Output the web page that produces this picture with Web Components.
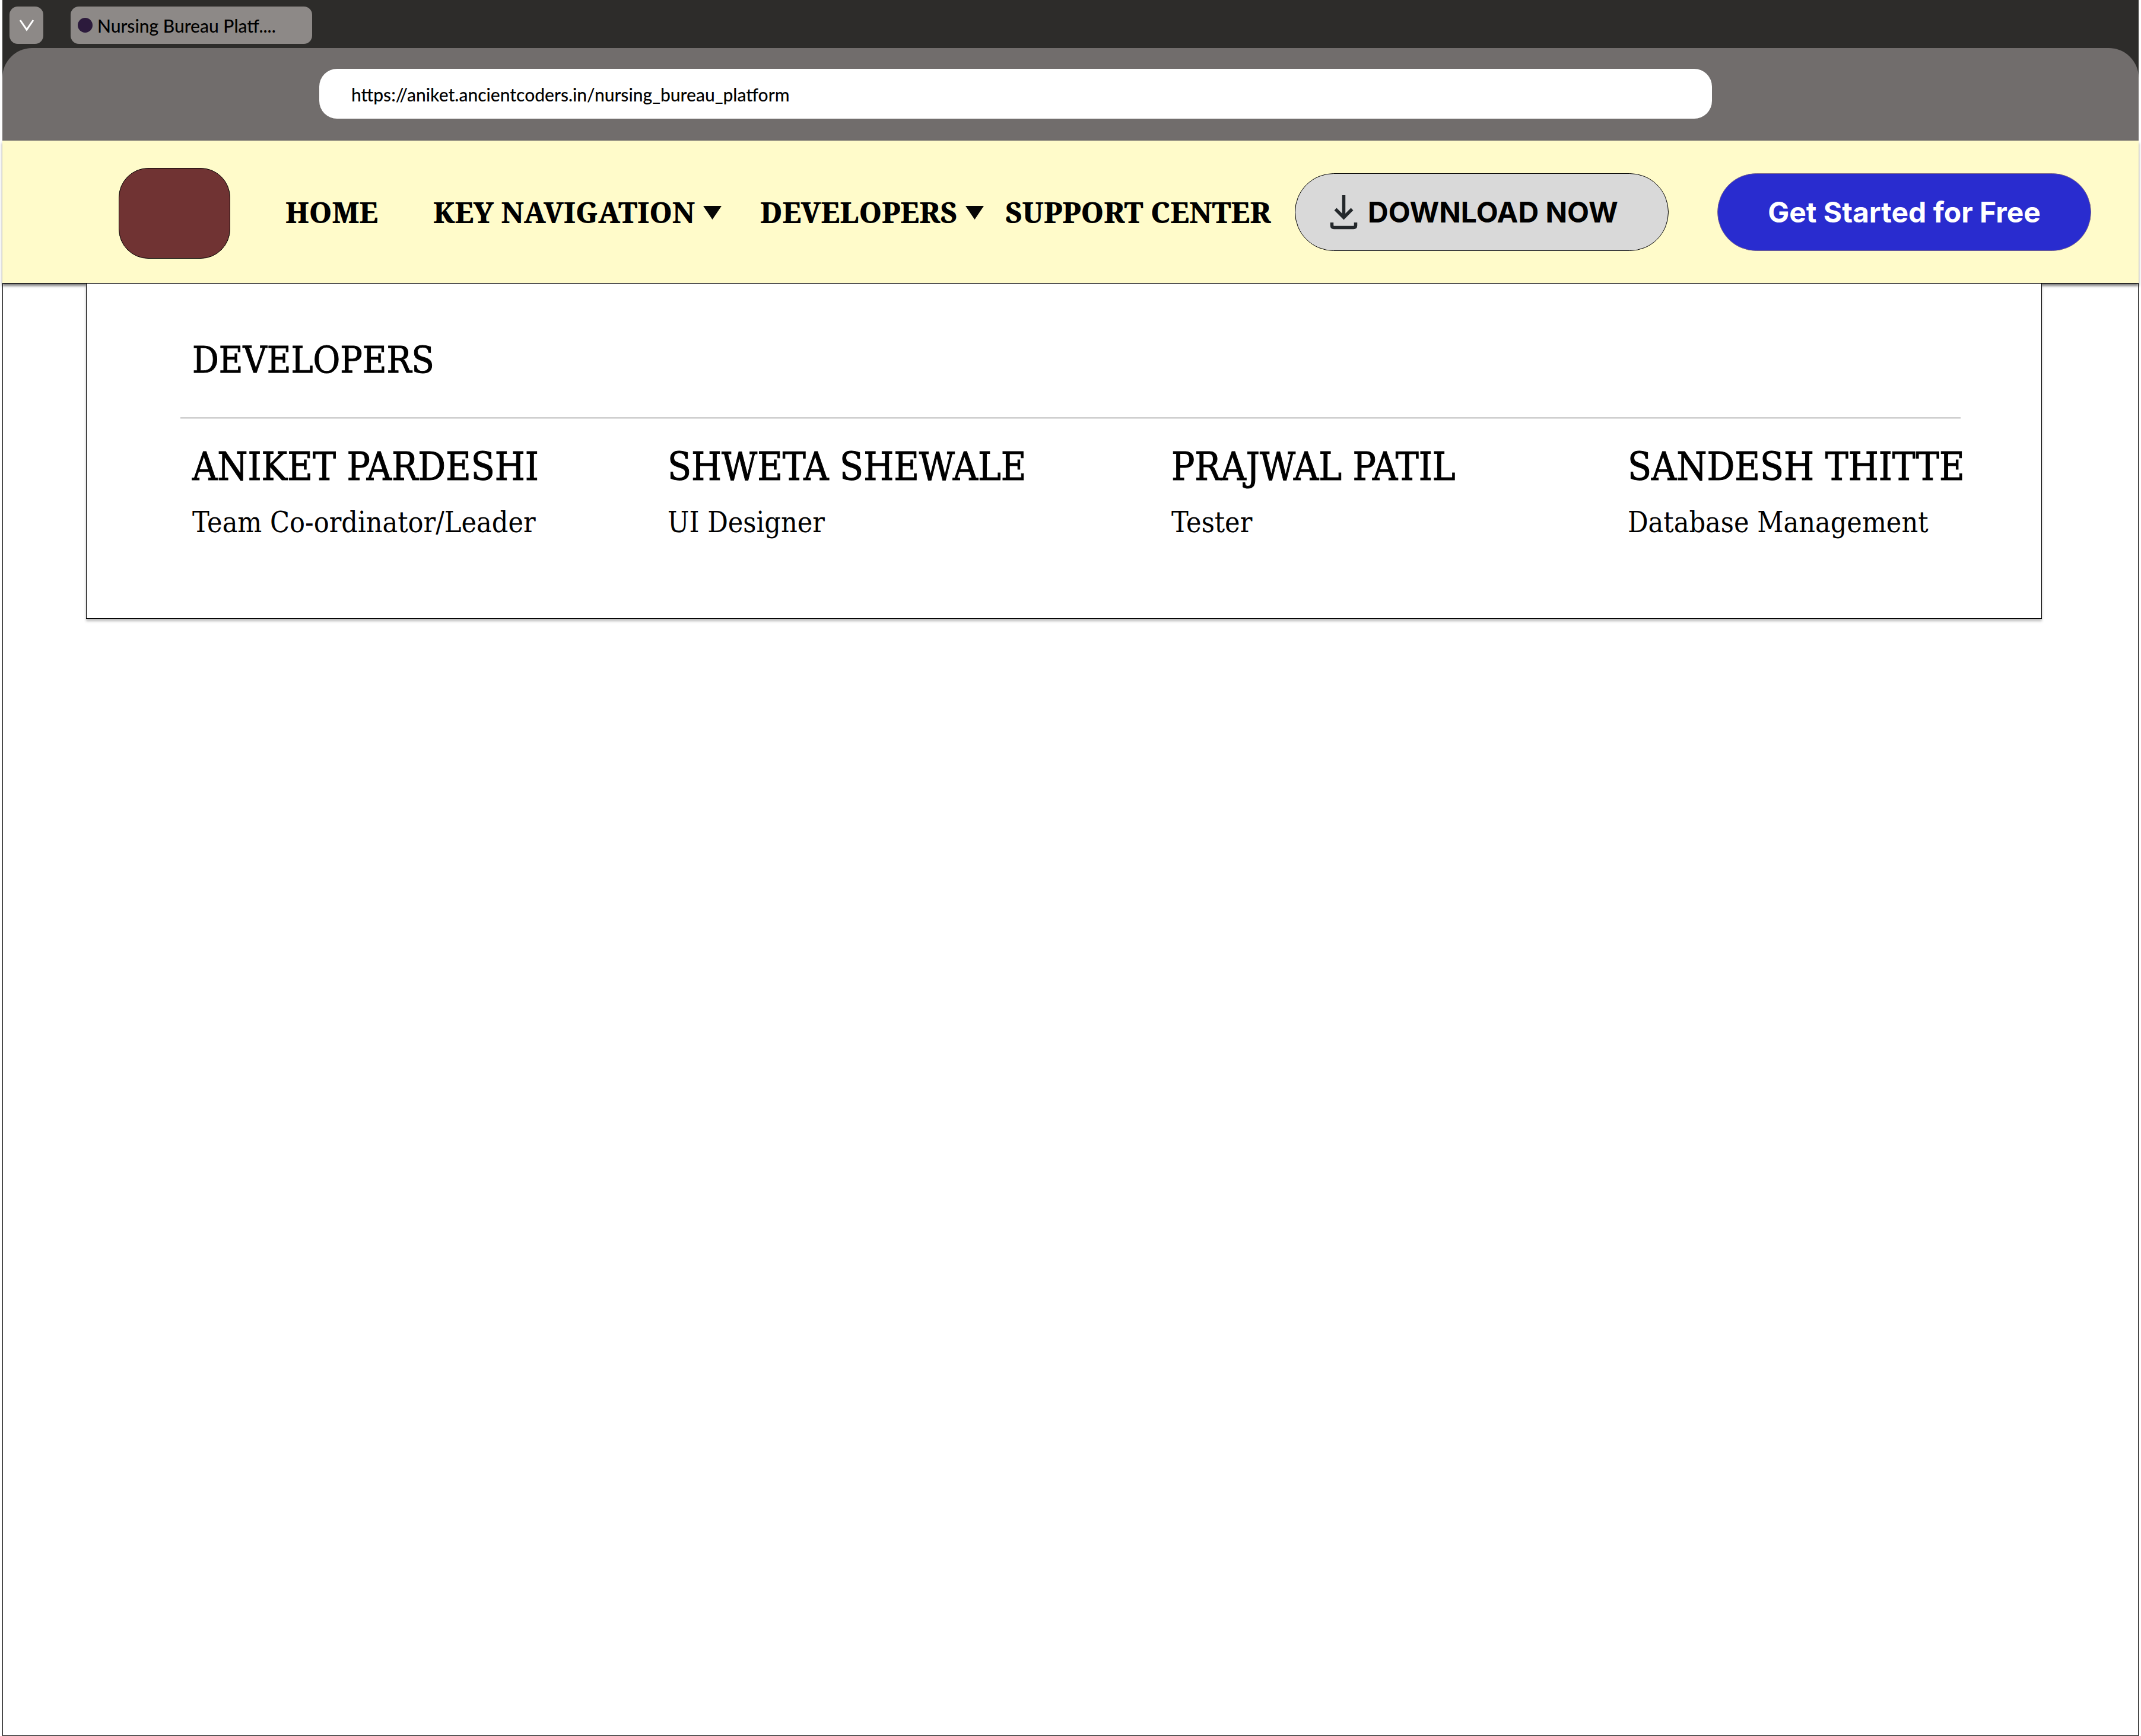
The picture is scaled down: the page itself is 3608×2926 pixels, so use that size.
<!DOCTYPE html>
<html lang="en">
<head>
<meta charset="utf-8">
<title>Nursing Bureau Platform</title>
<style>
  html, body { margin: 0; background: #fff; }
  body {
    --serif: "Noto Serif", "Liberation Serif", serif;
    --slab: "DejaVu Serif Condensed", "DejaVu Serif", serif;
    --sans: Inter, sans-serif;
    --round: Lato, sans-serif;
    color: #000;
    padding: 0 4px;
  }
</style>
</head>
<body>
<app-shell>
  <browser-chrome slot="chrome" tab="Nursing Bureau Platf...." url="https://aniket.ancientcoders.in/nursing_bureau_platform"></browser-chrome>
  <site-header slot="header">
    <nav-item href="#home">HOME</nav-item>
    <nav-item menu>KEY NAVIGATION</nav-item>
    <nav-item menu>DEVELOPERS</nav-item>
    <nav-item href="#support">SUPPORT CENTER</nav-item>
    <pill-button icon>DOWNLOAD NOW</pill-button>
    <pill-button primary>Get Started for Free</pill-button>
  </site-header>
  <mega-menu heading="DEVELOPERS">
    <team-member name="ANIKET PARDESHI">Team Co-ordinator/Leader</team-member>
    <team-member name="SHWETA SHEWALE">UI Designer</team-member>
    <team-member name="PRAJWAL PATIL">Tester</team-member>
    <team-member name="SANDESH THITTE">Database Management</team-member>
  </mega-menu>
</app-shell>

<script>
const define = (name, render) => customElements.define(name, class extends HTMLElement {
  connectedCallback() {
    if (this.shadowRoot) return;
    this.attachShadow({ mode: "open" }).innerHTML =
      "<style>*{box-sizing:border-box}:host{box-sizing:border-box}</style>" + render(this);
  }
});

define("app-shell", () => `
  <style>
    :host { display: flex; flex-direction: column; min-height: 100vh; }
    main { flex: 1; border: 1px solid #000; border-top: 0; padding: 0 162px 0 140px; }
    ::slotted([slot=header]) { position: relative; }
  </style>
  <slot name="chrome"></slot>
  <slot name="header"></slot>
  <main><slot></slot></main>`);

define("browser-chrome", el => `
  <style>
    :host { display: block; background: #2d2c2a; }
    .tabs { display: flex; gap: 46px; padding: 11px 12px 7px; }
    button { border: 0; margin: 0; height: 63px; border-radius: 14px; background: #8d8987; color: #000; }
    .list { width: 57px; padding: 0; display: grid; place-items: center; }
    .tab { width: 407px; padding: 0 12px; display: flex; align-items: center; gap: 8px;
           font: 500 30px/36px var(--round); white-space: nowrap; }
    .dot { width: 25px; height: 25px; border-radius: 50%; background: #2c1a3c; }
    .bar { background: #716d6c; height: 156px; border-radius: 50px 50px 0 0; padding: 35px 719px 37px 534px; }
    input { display: block; width: 100%; height: 84px; border: 0; border-radius: 30px; background: #fff;
            padding: 2px 54px 0; color: #000; font: 500 30px/36px var(--round); }
  </style>
  <div class="tabs">
    <button class="list" aria-label="Search tabs">
      <svg width="26" height="20" viewBox="0 0 26 20" fill="none" stroke="#fff" stroke-width="3"><path d="M2 1L13 17L24 1"/></svg>
    </button>
    <button class="tab"><span class="dot"></span><span>${el.getAttribute("tab")}</span></button>
  </div>
  <div class="bar"><input type="text" aria-label="Address" value="${el.getAttribute("url")}"></div>`);

define("site-header", () => `
  <style>
    :host { display: block; background: #fffbca; border-bottom: 1px solid #000; box-shadow: 0 4px 4px rgba(0,0,0,.5); }
    nav { display: grid; align-items: center; height: 240px; padding: 0 80px 0 196px;
          grid-template-columns: minmax(0,281fr) minmax(0,249fr) minmax(0,551fr) minmax(0,413fr) minmax(0,488fr) minmax(0,712fr) minmax(0,630fr); }
    .logo { width: 188px; height: 153px; margin-top: 4px; border: 1px solid #000; border-radius: 50px; background: #703333; }
  </style>
  <nav><div class="logo"></div><slot></slot></nav>`);

define("nav-item", el => {
  const menu = el.hasAttribute("menu");
  const tag = menu ? "button" : "a";
  return `
  <style>
    :host { display: block; }
    a, button { display: flex; align-items: center; gap: 14px; border: 0; padding: 2px 0 0; margin: 0; background: none;
      color: #000; text-decoration: none; white-space: nowrap; font: 800 48px/64px var(--serif); }
  </style>
  <${tag} ${menu ? 'aria-haspopup="true"' : `href="${el.getAttribute("href")}"`}><span><slot></slot></span>${
    menu ? '<svg width="31" height="23" viewBox="0 0 31 23"><path d="M0 0H31L15.500 23Z" fill="#060606"/></svg>' : ""}</${tag}>`;
});

define("pill-button", el => `
  <style>
    :host { display: block; width: 630px; }
    button { width: 100%; height: 131px; border: 1px solid #000; border-radius: 66px; background: #d9d9d9; color: #000;
      display: flex; align-items: center; gap: 16px; padding: 2px 58px 0; margin: 0;
      font: 700 48px/58px var(--sans); white-space: nowrap; }
    :host([primary]) button { background: #292ccf; border-color: #77648a; color: #fff; justify-content: center; }
  </style>
  <button>${el.hasAttribute("icon") ? `<svg width="48" height="58" viewBox="0 0 48 58" fill="none" stroke="#24282b">
    <path d="M23.500 0V38" stroke-width="5.500"/><path d="M9.500 23.500L23.500 37.500L37.500 23.500" stroke-width="5.500"/>
    <path d="M3.500 46V51Q3.500 54.500 7 54.500H40Q43.500 54.500 43.500 51V46" stroke-width="5.500"/></svg>` : ""}<span><slot></slot></span></button>`);

define("mega-menu", el => `
  <style>
    :host { display: block; background: #fff; border: 1px solid #000; border-top: 0; position: relative;
      box-shadow: 0 4px 4px rgba(0,0,0,.25); padding: 87px 136px 130px 158px; }
    h2 { margin: 0; padding-left: 20px; font: 400 62px/84px var(--slab); -webkit-text-stroke: 1px; }
    hr { margin: 55px 0 40px; border: 0; height: 1px; background: #000; }
    .team { display: grid; padding-left: 20px;
      grid-template-columns: minmax(0,801fr) minmax(0,849fr) minmax(0,769fr) minmax(0,561fr); }
  </style>
  <h2>${el.getAttribute("heading")}</h2>
  <hr>
  <div class="team"><slot></slot></div>`);

define("team-member", el => `
  <style>
    :host { display: block; white-space: nowrap; }
    h3 { margin: 0; font: 400 65px/84px var(--slab); -webkit-text-stroke: 1px; }
    p { margin: 19px 0 0; font: 300 48px/64px var(--slab); }
  </style>
  <h3>${el.getAttribute("name")}</h3>
  <p><slot></slot></p>`);
</script>
</body>
</html>
